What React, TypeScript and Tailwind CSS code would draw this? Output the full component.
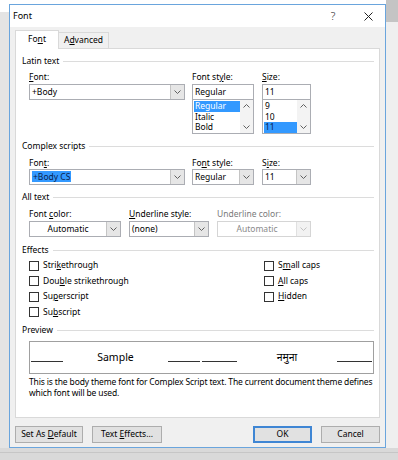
import React from 'react';

const U = ({ children }: { children: React.ReactNode }) => (
  <span className="underline underline-offset-[1px] decoration-[0.5px]">{children}</span>
);

const ChevDown = ({ color = '#606060' }: { color?: string }) => (
  <svg width="7" height="4" viewBox="0 0 7 4">
    <polyline points="0.5,0.5 3.5,3.5 6.5,0.5" fill="none" stroke={color} strokeWidth="1" />
  </svg>
);

const ChevUp = () => (
  <svg width="7" height="4" viewBox="0 0 7 4">
    <polyline points="0.5,3.5 3.5,0.5 6.5,3.5" fill="none" stroke="#606060" strokeWidth="1" />
  </svg>
);

// combobox with a drop button on the right
const Combo = ({
  w,
  children,
  center = false,
  disabled = false,
}: {
  w: string;
  children: React.ReactNode;
  center?: boolean;
  disabled?: boolean;
}) => (
  <div
    className={`flex h-[16px] ${w} border ${
      disabled ? 'border-[#d5d5d5] bg-white text-[#8a8a8a]' : 'border-[#abadb3] bg-white'
    }`}
  >
    <div className={`flex flex-1 items-center px-[2px] whitespace-nowrap ${center ? 'justify-center' : ''}`}>
      <span>{children}</span>
    </div>
    <div
      className={`flex w-[14px] items-center justify-center border-l ${
        disabled ? 'border-[#e0e0e0] bg-[#f2f2f2]' : 'border-[#c4c4c4] bg-[#e6e6e6]'
      }`}
    >
      <ChevDown color={disabled ? '#c2c2c2' : '#606060'} />
    </div>
  </div>
);

const TextBox = ({ w, children }: { w: string; children: React.ReactNode }) => (
  <div className={`flex h-[16px] ${w} items-center border border-[#abadb3] bg-white px-[2px]`}>{children}</div>
);

const ListBox = ({ w, items, selected }: { w: string; items: string[]; selected: number }) => (
  <div className={`flex h-[34px] ${w} border border-[#abadb3] border-t-0 bg-white`}>
    <div className="flex flex-1 flex-col pt-[1px] pl-px">
      {items.map((it, i) => (
        <div
          key={it}
          className={`h-[10.5px] leading-[10.5px] pl-px ${i === selected ? 'bg-[#3399ff] text-white' : ''}`}
        >
          {it}
        </div>
      ))}
    </div>
    <div className="flex w-[13px] flex-col items-center justify-between bg-[#f3f3f3] py-[4px]">
      <ChevUp />
      <ChevDown />
    </div>
  </div>
);

const Header = ({ children }: { children: React.ReactNode }) => (
  <div className="flex h-[12px] items-center leading-[12px]">
    <span className="whitespace-nowrap">{children}</span>
    <div className="ml-[4px] h-px flex-1 bg-[#dcdcdc]" />
  </div>
);

const Label = ({ children, dim = false }: { children: React.ReactNode; dim?: boolean }) => (
  <div className={`h-[12px] leading-[12px] whitespace-nowrap ${dim ? 'text-[#7a7a7a]' : ''}`}>{children}</div>
);

const Check = ({ children }: { children: React.ReactNode }) => (
  <div className="flex h-[15.5px] items-center">
    <div className="h-[10px] w-[10px] border border-[#333333] bg-white" />
    <span className="ml-[4px] whitespace-nowrap">{children}</span>
  </div>
);

const Btn = ({ w, children, primary = false }: { w: string; children: React.ReactNode; primary?: boolean }) => (
  <div
    className={`flex h-[17px] ${w} items-center justify-center bg-[#e1e1e1] whitespace-nowrap ${
      primary ? 'border-2 border-[#3f86d4]' : 'border border-[#adadad]'
    }`}
  >
    <span>{children}</span>
  </div>
);

const Blank = ({ w }: { w: string }) => <div className={`${w} h-px bg-[#333333]`} />;

export default function App() {
  return (
    <div className="relative h-[460px] w-[398px] overflow-hidden bg-[#e4e4e4] pl-[9px] pt-[4px] font-['Noto_Sans',sans-serif] text-[8.5px] text-black">
      {/* desktop behind the dialog */}
      <div className="absolute left-0 top-0 h-[4px] w-[386px] bg-white" />
      <div className="absolute left-0 top-0 h-[12px] w-[9px] bg-white" />
      <div className="absolute right-0 top-0 h-[22px] w-[12px] bg-[#c4c4c4]" />
      <div className="absolute right-0 top-[22px] h-[430px] w-[12px] bg-[#efefef]" />
      <div className="absolute bottom-0 left-0 h-[12px] w-full bg-[#d9d9d9]" />
      <div className="absolute bottom-[7px] left-0 h-px w-full bg-[#c6c6c6]" />

      <div className="relative flex h-[444px] w-[377px] flex-col border border-[#6aa5dd] bg-[#f0f0f0]">
        {/* title bar */}
        <div className="flex h-[22px] items-center bg-white pl-[3px] text-[9px]">
          <span>Font</span>
          <span className="ml-auto w-[10px] text-center text-[11px] font-light text-[#333333]">?</span>
          <svg className="ml-[26px] mr-[12px]" width="9" height="9" viewBox="0 0 9 9">
            <path d="M0.5 0.5 L8.5 8.5 M8.5 0.5 L0.5 8.5" stroke="#222222" strokeWidth="1" />
          </svg>
        </div>

        {/* tabs */}
        <div className="flex h-[21px] items-end pl-[5px]">
          <div className="relative z-10 -mb-px flex h-[19px] w-[44px] items-center justify-center border border-b-0 border-[#d9d9d9] bg-white pb-[1px]">
            <span>
              Fo<U>n</U>t
            </span>
          </div>
          <div className="flex h-[16px] w-[50px] items-center justify-center border border-b-0 border-l-0 border-[#d9d9d9] bg-[#f0f0f0]">
            <span>
              A<U>d</U>vanced
            </span>
          </div>
        </div>

        {/* tab panel */}
        <div className="ml-[5px] flex h-[370px] w-[365px] flex-col border border-[#d9d9d9] bg-white pl-[6px] pr-[5px]">
          <div className="mt-[6px]">
            <Header>Latin text</Header>
          </div>
          <div className="mt-[4px] flex pl-[7px]">
            <div className="flex flex-col">
              <Label>
                <U>F</U>ont:
              </Label>
              <div className="mt-px">
                <Combo w="w-[156px]">+Body</Combo>
              </div>
            </div>
            <div className="ml-[7px] flex flex-col">
              <Label>
                Font st<U>y</U>le:
              </Label>
              <div className="mt-px">
                <TextBox w="w-[62px]">Regular</TextBox>
                <ListBox w="w-[62px]" items={['Regular', 'Italic', 'Bold']} selected={0} />
              </div>
            </div>
            <div className="ml-[8px] flex flex-col">
              <Label>
                <U>S</U>ize:
              </Label>
              <div className="mt-px">
                <TextBox w="w-[49px]">11</TextBox>
                <div className="flex h-[34px] w-[49px] border border-t-0 border-[#abadb3] bg-white">
                  <div className="flex flex-1 flex-col pt-[1px] pl-px">
                    <div className="h-[10.5px] pl-px leading-[10.5px]">9</div>
                    <div className="h-[10.5px] pl-px leading-[10.5px]">10</div>
                    <div className="h-[10.5px] bg-[#3399ff] pl-px leading-[10.5px] text-[#0a1f4d]">11</div>
                  </div>
                  <div className="flex w-[13px] flex-col items-center justify-between bg-[#f3f3f3] py-[4px]">
                    <ChevUp />
                    <ChevDown />
                  </div>
                </div>
              </div>
            </div>
          </div>

          <div className="mt-[6px]">
            <Header>Complex scripts</Header>
          </div>
          <div className="mt-[5px] flex pl-[7px]">
            <div className="flex flex-col">
              <Label>
                Fon<U>t</U>:
              </Label>
              <Combo w="w-[156px]">
                <span className="bg-[#3399ff] px-px text-[#0a1f4d]">+Body CS</span>
              </Combo>
            </div>
            <div className="ml-[7px] flex flex-col">
              <Label>
                Fo<U>n</U>t style:
              </Label>
              <Combo w="w-[62px]">Regular</Combo>
            </div>
            <div className="ml-[8px] flex flex-col">
              <Label>
                S<U>i</U>ze:
              </Label>
              <Combo w="w-[49px]">11</Combo>
            </div>
          </div>

          <div className="mt-[6px]">
            <Header>All text</Header>
          </div>
          <div className="mt-[5px] flex pl-[7px]">
            <div className="flex flex-col">
              <Label>
                Font <U>c</U>olor:
              </Label>
              <div className="mt-px">
                <Combo w="w-[92px]" center>
                  Automatic
                </Combo>
              </div>
            </div>
            <div className="ml-[8px] flex flex-col">
              <Label>
                <U>U</U>nderline style:
              </Label>
              <div className="mt-px">
                <Combo w="w-[80px]">(none)</Combo>
              </div>
            </div>
            <div className="ml-[8px] flex flex-col">
              <Label dim>Underline color:</Label>
              <div className="mt-px">
                <Combo w="w-[94px]" center disabled>
                  Automatic
                </Combo>
              </div>
            </div>
          </div>

          <div className="mt-[7px]">
            <Header>Effects</Header>
          </div>
          <div className="mt-[2px] flex pl-[7px]">
            <div className="flex w-[235px] flex-col">
              <Check>
                Stri<U>k</U>ethrough
              </Check>
              <Check>
                Dou<U>b</U>le strikethrough
              </Check>
              <Check>
                Su<U>p</U>erscript
              </Check>
              <Check>
                Su<U>b</U>script
              </Check>
            </div>
            <div className="flex flex-col">
              <Check>
                S<U>m</U>all caps
              </Check>
              <Check>
                <U>A</U>ll caps
              </Check>
              <Check>
                <U>H</U>idden
              </Check>
            </div>
          </div>

          <div className="mt-[4px]">
            <Header>Preview</Header>
          </div>
          <div className="ml-[7px] mt-[5px] flex h-[33px] items-center border border-[#a0a0a0] bg-white pr-px text-[10.5px]">
            <div className="ml-px mt-[8px]">
              <Blank w="w-[32px]" />
            </div>
            <div className="ml-[34px] w-[37px] text-center whitespace-nowrap">Sample</div>
            <div className="ml-[34px] mt-[8px] flex">
              <Blank w="w-[32px]" />
              <div className="ml-[2px]">
                <Blank w="w-[35px]" />
              </div>
            </div>
            <div className="ml-[35px] w-[30px] text-center whitespace-nowrap">नमुना</div>
            <div className="ml-auto mt-[8px]">
              <Blank w="w-[35px]" />
            </div>
          </div>
          <div className="ml-[7px] mt-[2px] whitespace-nowrap leading-[11px] tracking-[-0.14px]">
            This is the body theme font for Complex Script text. The current document theme defines
            <br />
            which font will be used.
          </div>
        </div>

        {/* bottom buttons */}
        <div className="mt-[8px] flex pl-[5px]">
          <Btn w="w-[68px]">
            Set As <U>D</U>efault
          </Btn>
          <div className="ml-[9px]">
            <Btn w="w-[70px]">
              Text <U>E</U>ffects...
            </Btn>
          </div>
          <div className="ml-[91px]">
            <Btn w="w-[59px]" primary>
              OK
            </Btn>
          </div>
          <div className="ml-[9px]">
            <Btn w="w-[59px]">Cancel</Btn>
          </div>
        </div>
      </div>
    </div>
  );
}
